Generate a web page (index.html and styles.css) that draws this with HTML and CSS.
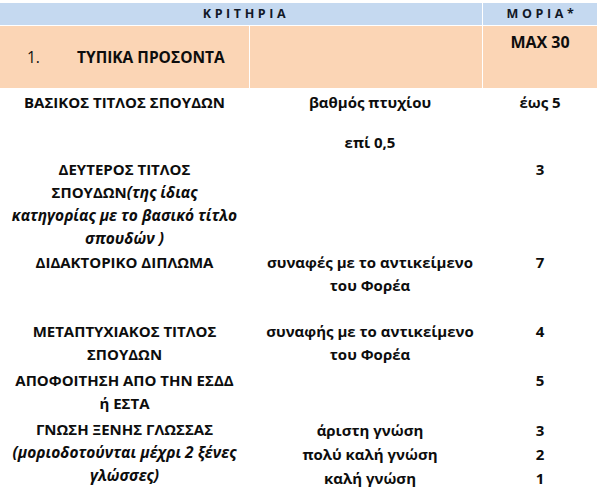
FILE: index.html
```html
<!DOCTYPE html>
<html lang="el">
<head>
<meta charset="utf-8">
<title>Κριτήρια</title>
<link rel="stylesheet" href="styles.css">
</head>
<body>
<div class="sheet">
  <div class="hdr">
    <div class="h-crit">ΚΡΙΤΗΡΙΑ</div>
    <div class="h-mor">ΜΟΡΙΑ*</div>
  </div>
  <div class="sec">
    <div class="sec-title"><span class="num">1.</span><span>ΤΥΠΙΚΑ ΠΡΟΣΟΝΤΑ</span></div>
    <div class="sec-mid"></div>
    <div class="sec-max">MAX 30</div>
  </div>

  <div class="row r1">
    <div class="c1">ΒΑΣΙΚΟΣ ΤΙΤΛΟΣ ΣΠΟΥΔΩΝ</div>
    <div class="c2"><div>βαθμός πτυχίου</div><div class="sub">επί 0,5</div></div>
    <div class="c3">έως 5</div>
  </div>

  <div class="row r2">
    <div class="c1">ΔΕΥΤΕΡΟΣ ΤΙΤΛΟΣ<br>ΣΠΟΥΔΩΝ<em>(της ίδιας<br>κατηγορίας με το βασικό τίτλο<br>σπουδών )</em></div>
    <div class="c2"></div>
    <div class="c3">3</div>
  </div>

  <div class="row r3">
    <div class="c1">ΔΙΔΑΚΤΟΡΙΚΟ ΔΙΠΛΩΜΑ</div>
    <div class="c2">συναφές με το αντικείμενο<br>του Φορέα</div>
    <div class="c3">7</div>
  </div>

  <div class="row r4">
    <div class="c1">ΜΕΤΑΠΤΥΧΙΑΚΟΣ ΤΙΤΛΟΣ<br>ΣΠΟΥΔΩΝ</div>
    <div class="c2">συναφής με το αντικείμενο<br>του Φορέα</div>
    <div class="c3">4</div>
  </div>

  <div class="row r5">
    <div class="c1">ΑΠΟΦΟΙΤΗΣΗ ΑΠΟ ΤΗΝ ΕΣΔΔ<br>ή ΕΣΤΑ</div>
    <div class="c2"></div>
    <div class="c3">5</div>
  </div>

  <div class="row r6">
    <div class="c1">ΓΝΩΣΗ ΞΕΝΗΣ ΓΛΩΣΣΑΣ<br><em>(μοριοδοτούνται μέχρι 2 ξένες<br>γλώσσες)</em></div>
    <div class="c2 lang">άριστη γνώση<br>πολύ καλή γνώση<br>καλή γνώση</div>
    <div class="c3 lang">3<br>2<br>1</div>
  </div>
</div>
</body>
</html>
```

FILE: styles.css
```css
html, body {
  margin: 0;
  padding: 0;
  background: #ffffff;
}

body {
  font-family: "Open Sans", "Noto Sans", sans-serif;
  color: #0d0d0d;
  width: 600px;
  height: 492px;
  overflow: hidden;
}

.sheet {
  padding-top: 3px;
  width: 597px;
}

.hdr {
  display: grid;
  grid-template-columns: 482px 114px;
  column-gap: 1px;
  height: 22px;
}

.hdr > div {
  background: #c5d9f0;
  font-weight: 700;
  font-size: 12.5px;
  letter-spacing: 3.6px;
  color: #111827;
  text-align: center;
  line-height: 22px;
}

.h-crit {
  padding-left: 10px;
}

.h-mor {
  padding-left: 4px;
}

.sec {
  margin-top: 1px;
  display: grid;
  grid-template-columns: 249px 232px 114px;
  column-gap: 1px;
  height: 62px;
}

.sec > div {
  background: #fbd5b5;
}

.sec-title {
  display: flex;
  align-items: center;
  font-size: 15.5px;
  font-weight: 700;
  padding-left: 27px;
}

.num {
  font-weight: 400;
  width: 50px;
}

.sec-max {
  font-weight: 700;
  font-size: 16px;
  text-align: center;
  padding-top: 5px;
  line-height: 22px;
}

.row {
  display: grid;
  grid-template-columns: 249px 232px 114px;
  column-gap: 1px;
  font-weight: 700;
  font-size: 15px;
  line-height: 23px;
  text-align: center;
}

.c2 {
  padding-left: 8px;
}

.sub {
  margin-top: 17px;
}

em {
  font-style: italic;
  font-size: 15.5px;
}

.r1 { padding-top: 3px; }
.r2 { padding-top: 4px; }
.r3 { padding-top: 1px; }
.r4 { padding-top: 23px; }
.r5 { padding-top: 3px; }
.r6 { padding-top: 3px; }

.lang {
  line-height: 24px;
}
```
